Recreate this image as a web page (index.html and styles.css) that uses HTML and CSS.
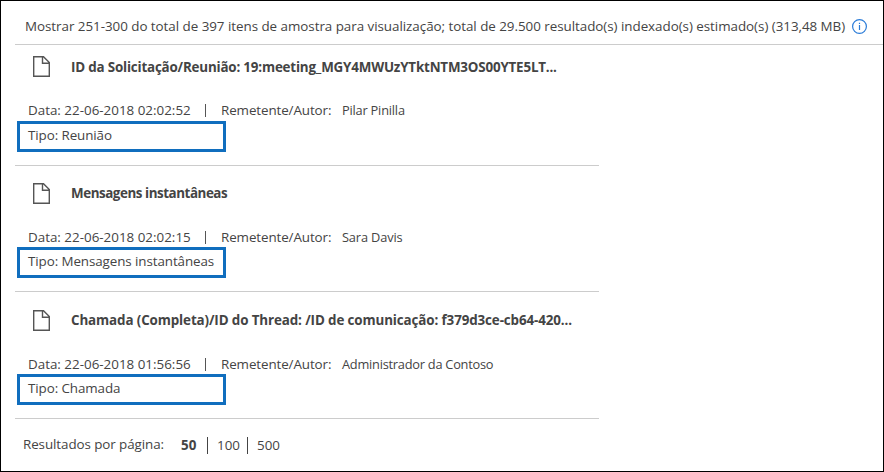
FILE: index.html
```html
<!DOCTYPE html>
<html lang="pt-BR">
<head>
<meta charset="utf-8">
<title>Resultados</title>
<link rel="stylesheet" href="styles.css">
</head>
<body>
<main class="panel">
  <header class="summary">
    <span class="summary-text">Mostrar 251-300 do total de 397 itens de amostra para visualização; total de 29.500 resultado(s) indexado(s) estimado(s) (313,48 MB)</span>
    <svg class="info" viewBox="0 0 15 15"><circle cx="7.5" cy="7.5" r="6.9" /><path d="M7.5 6V11M7.5 3.8v1.2" /></svg>
  </header>
  <section class="item first">
    <div class="title-row">
      <svg class="doc" viewBox="0 0 17 21"><path d="M.7 .7H10.5L16.3 6.5V20.3H.7ZM9.5 1V7.3H16" /></svg>
      <span class="title t1">ID da Solicitação/Reunião: 19:meeting_MGY4MWUzYTktNTM3OS00YTE5LT...</span>
    </div>
    <div class="meta"><span class="date">Data: 22-06-2018 02:02:52</span><span class="bar"></span><span class="label">Remetente/Autor:</span><span class="who w1">Pilar Pinilla</span></div>
    <div class="type"><span class="kind">Tipo: Reunião</span></div>
  </section>
  <section class="item second">
    <div class="title-row">
      <svg class="doc" viewBox="0 0 17 21"><path d="M.7 .7H10.5L16.3 6.5V20.3H.7ZM9.5 1V7.3H16" /></svg>
      <span class="title t2">Mensagens instantâneas</span>
    </div>
    <div class="meta"><span class="date">Data: 22-06-2018 02:02:15</span><span class="bar"></span><span class="label">Remetente/Autor:</span><span class="who w2">Sara Davis</span></div>
    <div class="type"><span class="kind">Tipo: Mensagens instantâneas</span></div>
  </section>
  <section class="item third">
    <div class="title-row">
      <svg class="doc" viewBox="0 0 17 21"><path d="M.7 .7H10.5L16.3 6.5V20.3H.7ZM9.5 1V7.3H16" /></svg>
      <span class="title t3">Chamada (Completa)/ID do Thread: /ID de comunicação: f379d3ce-cb64-420...</span>
    </div>
    <div class="meta"><span class="date">Data: 22-06-2018 01:56:56</span><span class="bar"></span><span class="label">Remetente/Autor:</span><span class="who w3">Administrador da Contoso</span></div>
    <div class="type"><span class="kind">Tipo: Chamada</span></div>
  </section>
  <footer class="pager">
    <span class="pager-label">Resultados por página:</span>
    <span class="size current">50</span>
    <span class="size">100</span>
    <span class="size">500</span>
  </footer>
</main>
</body>
</html>
```
FILE: styles.css
```css
* { box-sizing: border-box; }
body {
  margin: 0;
  background: #fff;
  color: #444;
  font: 13.4px/20px "Open Sans", "Noto Sans", sans-serif;
  white-space: nowrap;
}
.panel {
  width: 884px;
  height: 472px;
  border: 1px solid #000;
  padding-left: 14px;
  overflow: hidden;
}
.summary {
  display: flex;
  height: 44px;
  padding: 15px 0 0 10px;
  border-bottom: 1px solid #ccc;
}
.summary-text { width: 827px; flex: none; letter-spacing: -0.037px; }
.info {
  width: 15px;
  height: 15px;
  margin-top: 3px;
  fill: none;
  stroke: #2b7cd8;
  stroke-width: 1.2;
}
.item {
  display: flex;
  flex-direction: column;
  justify-content: flex-end;
  width: 584px;
  padding-bottom: 13px;
  border-bottom: 1px solid #ccc;
}
.first { height: 121px; }
.second { height: 126px; }
.third { height: 127px; }
.title-row {
  display: flex;
  height: 21px;
  padding-left: 18px;
  margin-bottom: 23px;
}
.first .title-row { margin-bottom: 24px; }
.doc {
  width: 17px;
  height: 21px;
  margin-right: 21px;
  fill: none;
  stroke: #555;
  stroke-width: 1.4;
}
.title { font-weight: 700; }
.first .title { padding-top: 1px; }
.t1 { letter-spacing: -0.19px; }
.t2 { letter-spacing: -0.45px; }
.t3 { letter-spacing: -0.12px; }
.meta {
  display: flex;
  height: 20px;
  padding-left: 13px;
}
.first .meta { margin-bottom: 1px; margin-top: -1px; }
.date { width: 177px; }
.bar {
  width: 1px;
  height: 13px;
  margin: 4px 15px 0 0;
  background: #555;
}
.label { width: 121px; letter-spacing: -0.1px; }
.who { font-size: 12.8px; }
.w1 { letter-spacing: -0.2px; }
.w2 { letter-spacing: -0.15px; }
.w3 { letter-spacing: -0.24px; }
.type {
  width: 209px;
  height: 31px;
  margin-left: 2px;
  padding: 1px 0 0 8px;
  border: 3px solid #106ebe;
}
.kind { letter-spacing: -0.09px; }
.pager {
  display: flex;
  align-items: center;
  height: 52px;
  padding-left: 8px;
}
.pager-label { width: 158px; margin-top: -2px; letter-spacing: -0.08px; }
.size {
  height: 17px;
  line-height: 17px;
  padding-left: 9px;
  width: 40px;
}
.size + .size { border-left: 1px solid #444; }
.current { width: 26px; padding-left: 0; font-weight: 700; }
```
